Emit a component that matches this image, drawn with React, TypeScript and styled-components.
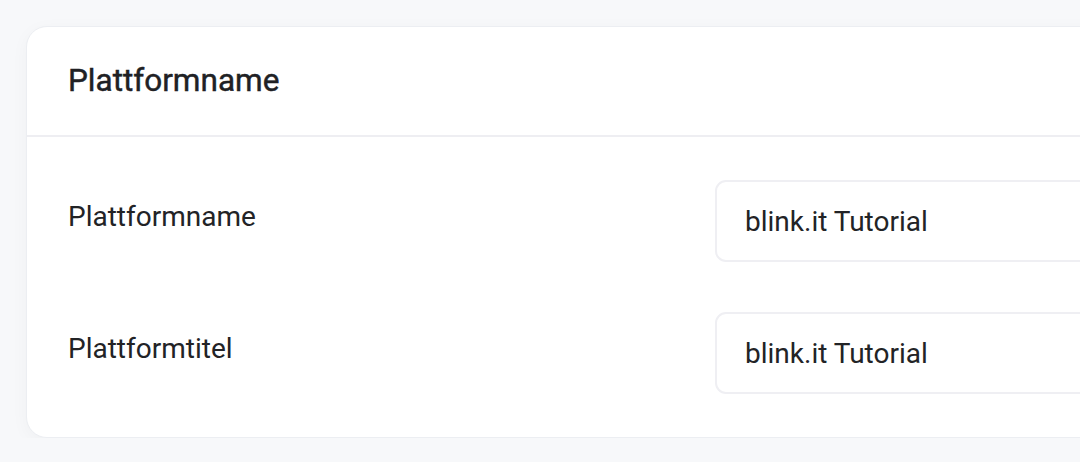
import React from "react";
import styled, { createGlobalStyle } from "styled-components";

const Global = createGlobalStyle`
  html, body {
    margin: 0;
    padding: 0;
    background: #f7f8fa;
    overflow: hidden;
  }
  body {
    font-family: Roboto, "Liberation Sans", sans-serif;
    color: #222326;
  }
`;

const Page = styled.div`
  padding: 26px 0 0 26px;
  width: 1500px;
`;

const Card = styled.section`
  width: 1376px;
  background: #ffffff;
  border: 1px solid #eceef2;
  border-radius: 21px;
  box-shadow: 0 4px 18px rgba(20, 24, 40, 0.035);
`;

const Header = styled.header`
  padding: 30px 41px 31px;
  border-bottom: 2px solid #eeeef2;
`;

const Title = styled.h2`
  margin: 0;
  font-size: 31.5px;
  line-height: 47px;
  font-weight: 400;
  -webkit-text-stroke: 0.45px #202124;
  color: #202124;
`;

const Body = styled.div`
  padding: 43px 41px 43px;
  display: flex;
  flex-direction: column;
  gap: 50px;
`;

const Row = styled.div`
  display: grid;
  grid-template-columns: 1fr 1fr;
  align-items: start;
`;

const Label = styled.label`
  padding-top: 16px;
  font-size: 28px;
  line-height: 42px;
  font-weight: 400;
  color: #222326;
`;

const Input = styled.input`
  box-sizing: border-box;
  width: 100%;
  height: 82px;
  padding: 0 28px;
  border: 2px solid #efeff3;
  border-radius: 11px;
  background: #fff;
  font-family: Roboto, "Liberation Sans", sans-serif;
  font-size: 28px;
  line-height: 42px;
  color: #222326;
  outline: none;
`;

const fields = [
  { label: "Plattformname", value: "blink.it Tutorial" },
  { label: "Plattformtitel", value: "blink.it Tutorial" },
];

export default function App() {
  return (
    <Page>
      <Global />
      <Card>
        <Header>
          <Title>Plattformname</Title>
        </Header>
        <Body>
          {fields.map((f) => (
            <Row key={f.label}>
              <Label>{f.label}</Label>
              <Input defaultValue={f.value} />
            </Row>
          ))}
        </Body>
      </Card>
    </Page>
  );
}
